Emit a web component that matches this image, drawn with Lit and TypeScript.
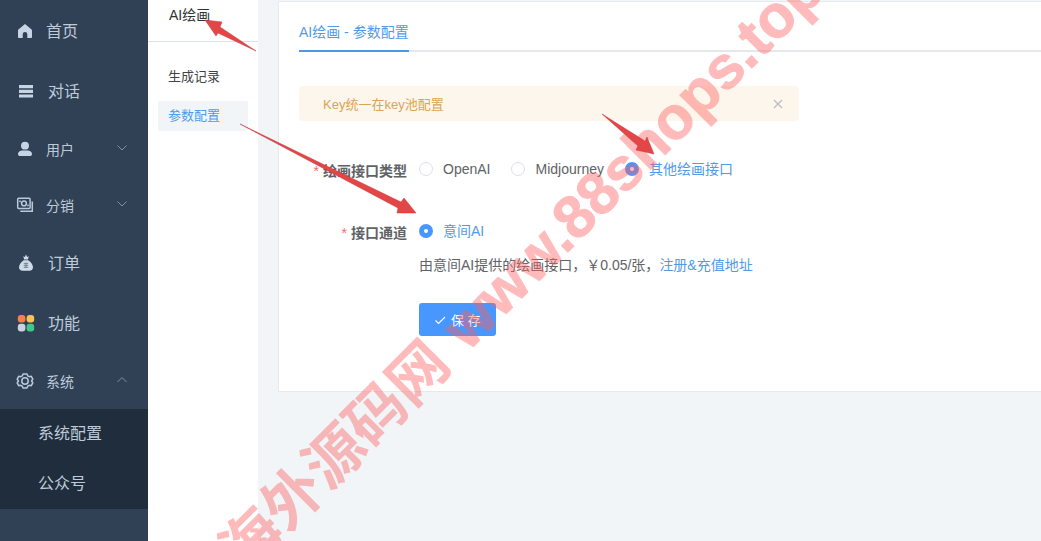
import { LitElement, html, svg, css, TemplateResult } from "lit";
import { customElement, state } from "lit/decorators.js";

interface MenuEntry {
  label: string;
  icon: TemplateResult;
  kind: "home" | "link" | "group";
  open?: boolean;
}

const icons = {
  home: svg`<path fill="#c6d4e4" d="M9 2 2.4 7.4c-.3.3-.4.6-.4 1V15c0 .6.4 1 1 1h3.700v-3.600a2.300 2.300 0 0 1 4.600 0V16H15c.6 0 1-.4 1-1V8.400c0-.4-.1-.7-.4-1z"/>`,
  list: svg`<path fill="#c6d4e4" d="M2 3h14v3.200H2zM2 7.700h14v3.200H2zM2 12.400h14v3.200H2z"/>`,
  user: svg`<ellipse cx="9" cy="5.700" rx="4" ry="3.900" fill="#c6d4e4"/><path fill="#c6d4e4" d="M2 14c0-2.400 2-3.600 4.300-3.600h5.400c2.300 0 4.300 1.200 4.300 3.600 0 1.400-1 2-2 2H4c-1 0-2-.6-2-2z"/>`,
  money: svg`<g fill="none" stroke="#b9c9db" stroke-width="1.500"><rect x="1.700" y="2.300" width="12.400" height="10.200" rx="1"/><circle cx="8" cy="7.400" r="2.400"/><path d="M4 4.500v1.800M12 8.500v1.800M16.300 5.500v9.700H4.300"/></g>`,
  bag: svg`<path fill="#cfdbe6" d="M6.300 2.200l1.600.9L9 .6l1.200 2.500 1.600-.9-.9 3.300H7.100zM6.700 6.300h4.600c2.700 2 4.700 4.600 4.700 7 0 2.200-1.500 3.400-3.500 3.400h-7c-2 0-3.500-1.200-3.500-3.400 0-2.400 2-5 4.700-7z"/><path d="M6.800 9.300h4.400M6.800 11.300h4.400M6.800 13.300h4.400M9 9v5" stroke="#6d8094" stroke-width="1"/>`,
  grid: svg`<rect x=".8" y="1" width="7.600" height="7.600" rx="3" fill="#f58346"/><rect x="9.600" y="1" width="7.600" height="7.600" rx="3" fill="#f8c350"/><rect x=".8" y="9.800" width="7.600" height="7.600" rx="3" fill="#c9d2dd"/><rect x="9.600" y="9.800" width="7.600" height="7.600" rx="3" fill="#41c98b"/>`,
  gear: svg`<g fill="none" stroke="#b9c9db" stroke-width="1.500" stroke-linejoin="round"><path d="M7 1.900h4l.7 1.900 1.600.9 2-.4 1.500 2.900L15.500 9l1.300 1.800-1.500 2.900-2-.4-1.600.9-.7 1.900H7l-.7-1.900-1.600-.9-2 .4-1.500-2.900L2.500 9 1.200 7.200l1.500-2.900 2 .4 1.600-.9z"/><circle cx="9" cy="9" r="3.200"/></g>`,
};

const menu: MenuEntry[] = [
  { label: "首页", icon: icons.home, kind: "home" },
  { label: "对话", icon: icons.list, kind: "link" },
  { label: "用户", icon: icons.user, kind: "group" },
  { label: "分销", icon: icons.money, kind: "group" },
  { label: "订单", icon: icons.bag, kind: "link" },
  { label: "功能", icon: icons.grid, kind: "link" },
  { label: "系统", icon: icons.gear, kind: "group", open: true },
];

@customElement("side-menu")
export class SideMenu extends LitElement {
  static styles = css`
    :host { display: block; background: #304156; color: #bfcbd9; }
    .menu { display: flex; flex-direction: column; padding-top: 1px; }
    .row {
      display: flex; align-items: center; gap: 12px; box-sizing: border-box;
      width: 100%; padding: 0 20px 0 16px; border: 0; background: none;
      color: inherit; font: inherit; text-align: left; text-decoration: none; cursor: pointer;
    }
    .home, .link { height: 60px; font-size: 16px; }
    .group { height: 56px; font-size: 14px; }
    .icon { flex: none; width: 18px; height: 18px; }
    .link .icon { padding: 0 1px; }
    .label { flex: 1; }
    .home .label, .link .label { padding-bottom: 2px; }
    .chevron { width: 12px; height: 12px; fill: none; stroke: #8190a2; }
    .sub { background: #1f2d3d; }
    .sub a { display: block; padding-left: 38px; line-height: 50px; font-size: 16px; color: inherit; text-decoration: none; }
  `;

  render() {
    return html`<nav class="menu">
      ${menu.map((m) => {
        const icon = html`<svg class="icon" viewBox="0 0 18 18" aria-hidden="true">${m.icon}</svg>`;
        return m.kind === "group"
          ? html`<button class="row group" type="button" aria-expanded=${m.open ? "true" : "false"}>
              ${icon}<span class="label">${m.label}</span>
              <svg class="chevron" viewBox="0 0 12 12" aria-hidden="true"><path d=${m.open ? "M1.500 7 6 2.500 10.500 7" : "M1.500 2.500 6 7l4.500-4.500"} /></svg>
            </button>`
          : html`<a class="row ${m.kind}" href="#">${icon}<span class="label">${m.label}</span></a>`;
      })}
      <div class="sub"><a href="#">系统配置</a><a href="#">公众号</a></div>
    </nav>`;
  }
}

@customElement("config-form")
export class ConfigForm extends LitElement {
  @state() private kind = "其他绘画接口";

  static styles = css`
    :host { display: block; font-size: 14px; color: #606266; }
    .alert {
      display: flex; align-items: center; justify-content: space-between; box-sizing: border-box;
      max-width: 500px; height: 35px; padding: 0 15px 0 24px; border-radius: 4px;
      background: #fdf6ec; color: #dda450; font-size: 13px;
    }
    .close { display: flex; padding: 0; border: 0; background: none; color: #b9bcc2; cursor: pointer; }
    .close svg { width: 12px; height: 12px; fill: none; stroke: currentColor; stroke-width: 1.2; }
    .line { display: grid; grid-template-columns: 108px 1fr; gap: 12px; align-items: start; }
    .first { margin-top: 28px; margin-bottom: 18px; }
    .title { line-height: 44px; font-weight: 700; text-align: right; white-space: nowrap; }
    .title::before { content: "*"; margin-right: 4px; color: #f56c6c; font-weight: 400; }
    .options { display: flex; gap: 21px; line-height: 40px; }
    .option { display: flex; align-items: center; gap: 10px; white-space: nowrap; cursor: pointer; }
    .option input {
      appearance: none; box-sizing: border-box; width: 14px; height: 14px; margin: 0;
      border: 1px solid #dcdfe6; border-radius: 50%; background: #fff;
    }
    .option input:checked { border: 5px solid #4897ff; }
    .option:has(input:checked), .note a { color: #509ae8; }
    .note { margin: 0; line-height: 28px; }
    .note a { text-decoration: none; }
    .save {
      display: flex; align-items: center; gap: 5px; height: 33px; margin-top: 24px; padding: 0 15px;
      border: 0; border-radius: 3px; background: #4897ff; color: #fff; font: inherit; font-size: 13px; cursor: pointer;
    }
    .save svg { width: 12px; height: 12px; fill: none; stroke: currentColor; stroke-width: 1.2; }
  `;

  render() {
    return html`
      <div class="alert" role="alert">
        <span>Key统一在key池配置</span>
        <button class="close" type="button" aria-label="关闭"><svg viewBox="0 0 12 12"><path d="M2 2l8 8M10 2l-8 8" /></svg></button>
      </div>
      <form @submit=${(e: Event) => e.preventDefault()}>
        <div class="line first" role="radiogroup" aria-labelledby="kind">
          <div class="title" id="kind">绘画接口类型</div>
          <div class="options">
            ${["OpenAI", "Midjourney", "其他绘画接口"].map(
              (k) => html`<label class="option"><input type="radio" name="kind" .checked=${this.kind === k} @change=${() => (this.kind = k)} />${k}</label>`
            )}
          </div>
        </div>
        <div class="line" role="radiogroup" aria-labelledby="channel">
          <div class="title" id="channel">接口通道</div>
          <div>
            <div class="options"><label class="option"><input type="radio" name="channel" checked />意间AI</label></div>
            <p class="note">由意间AI提供的绘画接口，￥0.05/张，<a href="#">注册&amp;充值地址</a></p>
            <button class="save" type="submit"><svg viewBox="0 0 12 12" aria-hidden="true"><path d="M1.500 6.500 4.500 9.500 11 3" /></svg>保 存</button>
          </div>
        </div>
      </form>
    `;
  }
}

@customElement("app-root")
export class AppRoot extends LitElement {
  static styles = css`
    :host {
      display: block; position: relative; overflow: hidden; height: 100vh;
      font-family: "Liberation Sans", "Noto Sans CJK SC", sans-serif;
    }
    .shell { display: grid; grid-template-columns: 148px 110px 1fr; height: 100%; background: #f1f5f8; }
    .section { background: #fff; font-size: 13px; }
    .heading { margin: 0; padding-left: 21px; height: 41px; line-height: 31px; border-bottom: 1px solid #dde1e8; font-size: 14px; font-weight: 400; color: #303133; }
    .pages { display: flex; flex-direction: column; gap: 9px; padding: 20px 10px; }
    .pages a { padding-left: 10px; line-height: 30px; color: #404246; text-decoration: none; border-radius: 2px; }
    .pages .active { background: #f2f5f8; color: #509ae8; }
    .main { padding: 1px 0 0 20px; min-width: 0; }
    .card { background: #fff; border: 1px solid #e6eaf0; border-right: 0; padding: 0 0 55px 20px; }
    .tabs { display: flex; margin-bottom: 34px; border-bottom: 2px solid #e4e7ed; }
    .tab { margin-bottom: -2px; border-bottom: 2px solid #5097e0; line-height: 20px; padding: 20px 0 8px; color: #509ae8; font-size: 14px; text-decoration: none; }
    .overlay { position: absolute; top: 0; left: 0; width: 1041px; height: 541px; pointer-events: none; }
    .mark { fill: #ff6060; opacity: 0.42; font-weight: 700; }
    .mark .site { stroke: #ff6060; stroke-width: 1; }
    .arrow { fill: #e24646; stroke: #c9393f; stroke-width: 0.5; }
  `;

  render() {
    return html`
      <div class="shell">
        <side-menu></side-menu>
        <aside class="section">
          <h2 class="heading">AI绘画</h2>
          <nav class="pages"><a href="#">生成记录</a><a class="active" href="#">参数配置</a></nav>
        </aside>
        <main class="main">
          <section class="card">
            <div class="tabs"><a class="tab" href="#">AI绘画 - 参数配置</a></div>
            <config-form></config-form>
          </section>
        </main>
      </div>
      <svg class="overlay" viewBox="0 0 1041 541">
        <g class="mark" transform="translate(240 580) rotate(-45)">
          <text x="7" font-size="59">海外源码网</text>
          <text class="site" x="322" font-size="60">www.88shops.top</text>
        </g>
        <g class="arrow">
          <path d="M205 20 222 22 220 27 256 51 218 33 216 36z" />
          <path d="M240 124 401 202 404 198 416 213 397 213 398 208z" />
          <path d="M602 114 645 141 647 137 654 154 636 150 638 146z" />
        </g>
      </svg>
    `;
  }
}
